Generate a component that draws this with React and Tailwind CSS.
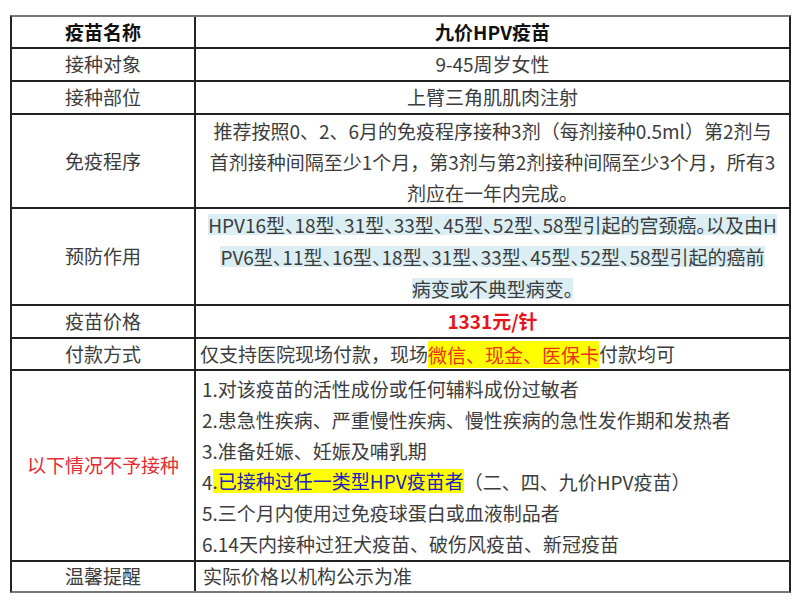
export default function App() {
  const font = { fontFamily: '"Noto Sans CJK SC", "Noto Sans", sans-serif' }

  return (
    <div className="w-[800px] h-[602px] bg-white pt-[15px] pl-[10px]" style={font}>
      <div className="w-[781px] border-2 border-[#222] border-t-[#777] border-b-[#777] text-[19px] text-[#3c3c3c]">
        {/* 疫苗名称 */}
        <div className="flex h-[32px] border-b-2 border-[#222]">
          <div className="w-[184px] shrink-0 border-r-2 border-[#222] flex items-center justify-center font-bold text-[#111]">疫苗名称</div>
          <div className="flex-1 min-w-0 flex items-center justify-center font-bold text-[#111]">九价HPV疫苗</div>
        </div>

        <div className="flex h-[33px] border-b-2 border-[#222]">
          <div className="w-[184px] shrink-0 border-r-2 border-[#222] flex items-center justify-center">接种对象</div>
          <div className="flex-1 min-w-0 flex items-center justify-center">9-45周岁女性</div>
        </div>

        <div className="flex h-[33px] border-b-2 border-[#222]">
          <div className="w-[184px] shrink-0 border-r-2 border-[#222] flex items-center justify-center">接种部位</div>
          <div className="flex-1 min-w-0 flex items-center justify-center">上臂三角肌肌肉注射</div>
        </div>

        <div className="flex h-[94px] border-b-2 border-[#222]">
          <div className="w-[184px] shrink-0 border-r-2 border-[#222] flex items-center justify-center">免疫程序</div>
          <div className="flex-1 min-w-0 flex flex-col justify-center text-center leading-[31px] whitespace-nowrap">
            <div>推荐按照0、2、6月的免疫程序接种3剂（每剂接种0.5ml）第2剂与</div>
            <div>首剂接种间隔至少1个月，第3剂与第2剂接种间隔至少3个月，所有3</div>
            <div>剂应在一年内完成。</div>
          </div>
        </div>

        <div className="flex h-[97px] border-b-2 border-[#222]">
          <div className="w-[184px] shrink-0 border-r-2 border-[#222] flex items-center justify-center">预防作用</div>
          <div className="flex-1 min-w-0 flex flex-col justify-center whitespace-nowrap [font-feature-settings:'halt']">
            {[
              'HPV16型、18型、31型、33型、45型、52型、58型引起的宫颈癌。以及由H',
              'PV6型、11型、16型、18型、31型、33型、45型、52型、58型引起的癌前',
              '病变或不典型病变。',
            ].map((line) => (
              <div key={line} className="h-[32px] flex items-center justify-center">
                <span className="inline-block h-[21px] leading-[21px] bg-[#dbeef3]">{line}</span>
              </div>
            ))}
          </div>
        </div>

        <div className="flex h-[33px] border-b-2 border-[#222]">
          <div className="w-[184px] shrink-0 border-r-2 border-[#222] flex items-center justify-center">疫苗价格</div>
          <div className="flex-1 min-w-0 flex items-center justify-center font-bold text-[#e8141b]">1331元/针</div>
        </div>

        <div className="flex h-[32px] border-b-2 border-[#222]">
          <div className="w-[184px] shrink-0 border-r-2 border-[#222] flex items-center justify-center">付款方式</div>
          <div className="flex-1 min-w-0 flex items-center pl-[4px] whitespace-nowrap">
            <span>仅支持医院现场付款，现场</span>
            <span className="inline-block h-[27px] leading-[27px] bg-[#ffff00] text-[#f0301a]">微信、现金、医保卡</span>
            <span>付款均可</span>
          </div>
        </div>

        <div className="flex h-[191px] border-b-2 border-[#222]">
          <div className="w-[184px] shrink-0 border-r-2 border-[#222] flex items-center justify-center text-[#ea2a33]">以下情况不予接种</div>
          <div className="flex-1 min-w-0 flex flex-col justify-center pl-[6px] leading-[31px] whitespace-nowrap">
            <div>1.对该疫苗的活性成份或任何辅料成份过敏者</div>
            <div>2.患急性疾病、严重慢性疾病、慢性疾病的急性发作期和发热者</div>
            <div>3.准备妊娠、妊娠及哺乳期</div>
            <div className="flex items-center h-[31px]">
              <span>4</span>
              <span className="inline-block h-[24px] leading-[24px] bg-[#ffff00]">
                .<span className="text-[#2020c0]">已接种过任一类型HPV疫苗者</span>
              </span>
              <span>（二、四、九价HPV疫苗）</span>
            </div>
            <div>5.三个月内使用过免疫球蛋白或血液制品者</div>
            <div>6.14天内接种过狂犬疫苗、破伤风疫苗、新冠疫苗</div>
          </div>
        </div>

        <div className="flex h-[29px]">
          <div className="w-[184px] shrink-0 border-r-2 border-[#222] flex items-center justify-center">温馨提醒</div>
          <div className="flex-1 min-w-0 flex items-center pl-[7px]">实际价格以机构公示为准</div>
        </div>
      </div>
    </div>
  )
}
